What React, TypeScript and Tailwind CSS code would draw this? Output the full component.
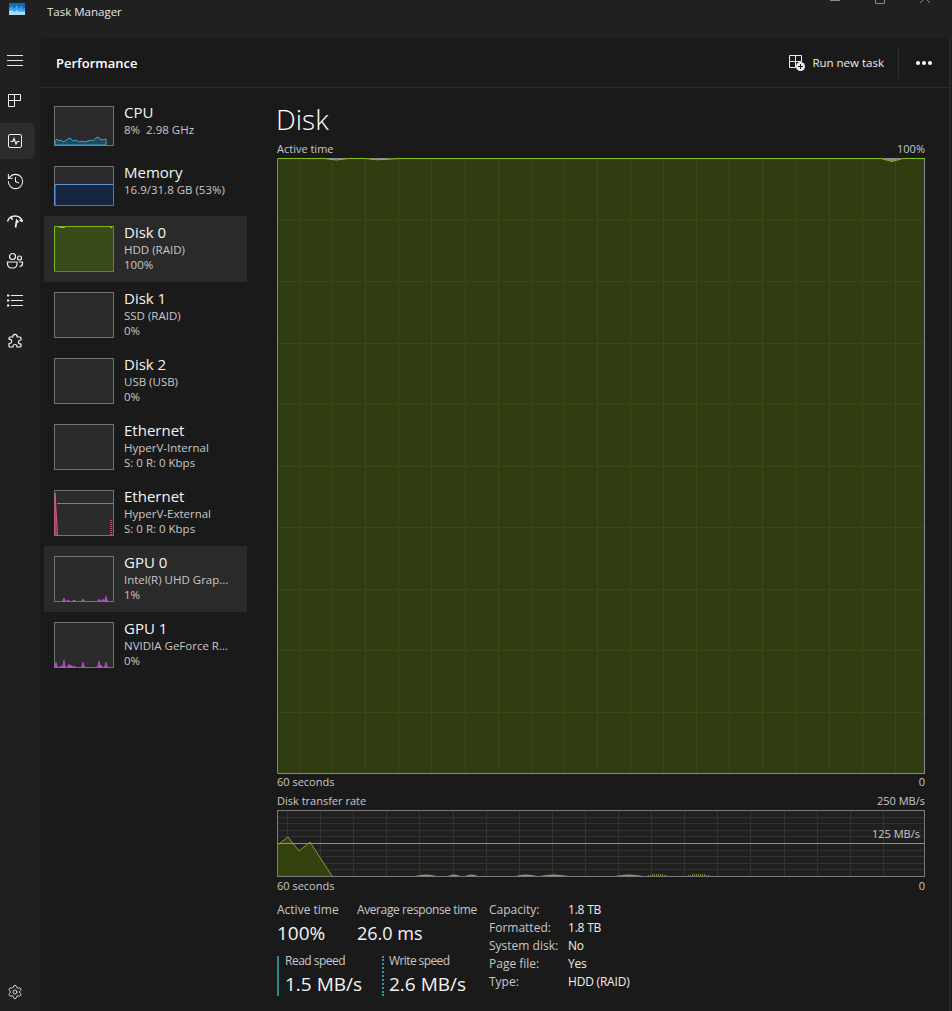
import type { ReactNode } from "react";
import { History, Settings } from "lucide-react";

const FONT = "font-['Open_Sans','Noto_Sans',sans-serif]";

const W = 648;
const H = 615;

function Rail() {
  return (
    <nav className="mb-[-1px] flex w-10 shrink-0 flex-col pt-[3px]">
      <RailBtn>
        <svg width="16" height="16" viewBox="0 0 16 16" stroke="#e4e4e4">
          <path d="M0 2.500h16M0 7.500h16M0 12.500h16" />
        </svg>
      </RailBtn>
      <RailBtn>
        <svg width="16" height="16" viewBox="0 0 16 16" fill="none" stroke="#eeeeee">
          <path d="M1.500 1.500h6v6h-6zM7.500 1.500h6v6h-6zM1.500 7.500h6v6h-6z" />
        </svg>
      </RailBtn>
      <RailBtn active>
        <svg width="16" height="16" viewBox="0 0 16 16" fill="none" stroke="#eeeeee">
          <rect x="1.500" y="1.500" width="13" height="13" rx="1.500" />
          <path d="M3.500 8.500h2.200l1.300-3 2 5.500 1.300-2.500h2.200" strokeWidth="1.200" />
        </svg>
      </RailBtn>
      <RailBtn>
        <History size={19} strokeWidth={1.3} className="text-[#f2f2f2]" />
      </RailBtn>
      <RailBtn>
        <svg width="18" height="16" viewBox="0 0 18 16" fill="none" stroke="#eeeeee" strokeWidth="1.500">
          <path d="M1.500 8.500c1-3 3.500-5.500 7.500-5.500s6.500 2.500 7.500 5.500" />
          <path d="M5 3.800l1.500 3M16.500 8.500l-3-1.500" />
          <path d="M9.500 14.500l1.200-7 1.800 2" strokeWidth="1.800" />
        </svg>
      </RailBtn>
      <RailBtn>
        <svg width="18" height="18" viewBox="0 0 18 18" fill="none" stroke="#f2f2f2" strokeWidth="1.200">
          <circle cx="6.500" cy="4.500" r="3" />
          <circle cx="13.500" cy="6" r="2" />
          <path d="M1.500 10h9.500v2a4 4 0 0 1-4 4H5.500a4 4 0 0 1-4-4z" />
          <path d="M13 10h3.500v1.500a3 3 0 0 1-3 3" />
        </svg>
      </RailBtn>
      <RailBtn>
        <svg width="16" height="16" viewBox="0 0 16 16" stroke="#eeeeee" fill="none">
          <path d="M4 2.500h12M4 7.500h12M4 12.500h12" />
          <path d="M0 2h2v1H0zM0 7h2v1H0zM0 12h2v1H0z" fill="#eeeeee" />
        </svg>
      </RailBtn>
      <RailBtn>
        <svg width="16" height="18" viewBox="0 -1 16 18" fill="none" stroke="#f2f2f2" strokeWidth="1.200">
          <path d="M5.800 3.500a2.200 2.200 0 0 1 4.400 0v.5H13a1 1 0 0 1 1 1V7h-.5a2 2 0 0 0 0 4h.5v2a1 1 0 0 1-1 1h-3v-.5a2 2 0 0 0-4 0v.5H3a1 1 0 0 1-1-1v-2.500h.5a2.200 2.200 0 0 0 0-4.400H2V5a1 1 0 0 1 1-1h2.800z" />
        </svg>
      </RailBtn>
      <div className="mt-auto">
        <RailBtn>
          <Settings size={16} strokeWidth={1.3} className="text-[#eeeeee]" />
        </RailBtn>
      </div>
    </nav>
  );
}

function RailBtn({ children, active }: { children: ReactNode; active?: boolean }) {
  return (
    <div className="flex h-10 w-[35px] items-center">
      <div
        className={`flex h-9 w-[35px] items-center justify-center rounded-r-md pr-[5px] ${active ? "bg-[#2d2d2d]" : ""}`}
      >
        {children}
      </div>
    </div>
  );
}

function Thumb({ tall, children, fill }: { tall?: boolean; children?: ReactNode; fill?: string }) {
  return (
    <div
      className={`relative w-[60px] shrink-0 border border-[#727272] ${tall ? "h-[46px]" : "h-10"} ${fill ?? "bg-[#2b2b2b]"}`}
    >
      {children}
    </div>
  );
}

function ThumbSvg({ h, children }: { h: number; children: ReactNode }) {
  return (
    <svg className="absolute -inset-px" width="60" height={h} viewBox={`0 0 60 ${h}`}>
      {children}
    </svg>
  );
}

// little peaks along the floor of a GPU thumbnail: [x, height]
function Spikes({ peaks }: { peaks: number[][] }) {
  const d = peaks.map(([x, h]) => `M${x - 1.5} 45L${x} ${45 - h}L${x + 1.5} 45z`).join("");
  return <path d={d} fill="#a548bf" stroke="#c85fe0" strokeWidth=".5" />;
}

function Row({
  name,
  lines,
  tall,
  selected,
  thumb,
}: {
  name: string;
  lines: string[];
  tall?: boolean;
  selected?: boolean;
  thumb: ReactNode;
}) {
  return (
    <div
      className={`flex w-[203px] items-start gap-[10px] pt-[10px] pl-[10px] ${tall ? "h-[66px]" : "h-[60px]"} ${selected ? "bg-[#2a2a2a]" : ""}`}
    >
      {thumb}
      <div className="mt-[-4px] min-w-0">
        <div className="text-[15px] leading-5 text-[#f4f4f4]">{name}</div>
        {lines.map((l) => (
          <div key={l} className="text-[11.5px] leading-[15px] whitespace-pre text-[#c8c8c8]">
            {l}
          </div>
        ))}
      </div>
    </div>
  );
}

function Sidebar() {
  return (
    <aside className="flex w-[237px] shrink-0 flex-col pt-2 pl-1">
      <Row
        name="CPU"
        lines={["8%  2.98 GHz"]}
        thumb={
          <Thumb>
            <ThumbSvg h={40}>
              <path
                d="M1 35l2-2 2 2 2-1 2 2 2-1 3-2 2-1 2 2 2 1 2-1 3 2 3-1 3 1 3-1 3-1 2 1 3-3 2-1 2 2 3 1 3-1V39H1z"
                fill="#1f4a5c"
                stroke="#38a8d8"
              />
            </ThumbSvg>
          </Thumb>
        }
      />
      <Row
        name="Memory"
        lines={["16.9/31.8 GB (53%)"]}
        thumb={
          <Thumb>
            <ThumbSvg h={40}>
              <rect x="1" y="19" width="58" height="20" fill="#17263f" />
              <path d="M1 39V18.500H59" fill="none" stroke="#5b94d6" />
              <path d="M.5 19V39" stroke="#5b94d6" />
            </ThumbSvg>
          </Thumb>
        }
      />
      <Row
        name="Disk 0"
        lines={["HDD (RAID)", "100%"]}
        tall
        selected
        thumb={
          <Thumb tall fill="bg-[#3a4a18]">
            <ThumbSvg h={46}>
              <path d="M.5 45V.500H59.500" fill="none" stroke="#7fb81c" />
              <path d="M5 1.500h6M56 1.500h2" stroke="#9aa58a" />
            </ThumbSvg>
          </Thumb>
        }
      />
      <Row name="Disk 1" lines={["SSD (RAID)", "0%"]} tall thumb={<Thumb tall />} />
      <Row name="Disk 2" lines={["USB (USB)", "0%"]} tall thumb={<Thumb tall />} />
      <Row name="Ethernet" lines={["HyperV-Internal", "S: 0 R: 0 Kbps"]} tall thumb={<Thumb tall />} />
      <Row
        name="Ethernet"
        lines={["HyperV-External", "S: 0 R: 0 Kbps"]}
        tall
        thumb={
          <Thumb tall>
            <ThumbSvg h={46}>
              <path d="M1 45V3l2.500 42z" fill="#7a2f4f" stroke="#e8517f" />
              <path d="M3 13.500H59" stroke="#e8517f" />
              <path d="M57 45V29" stroke="#b24a75" strokeWidth="2" strokeDasharray="1 1" />
              <path d="M59 45V35" stroke="#8a3a5c" strokeDasharray="1 1" />
            </ThumbSvg>
          </Thumb>
        }
      />
      <Row
        name="GPU 0"
        lines={["Intel(R) UHD Grap...", "1%"]}
        tall
        selected
        thumb={
          <Thumb tall>
            <ThumbSvg h={46}>
              <Spikes peaks={[[10, 3], [14, 1], [20, 1], [29, 2], [45, 2], [49, 2], [52, 5]]} />
            </ThumbSvg>
          </Thumb>
        }
      />
      <Row
        name="GPU 1"
        lines={["NVIDIA GeForce R...", "0%"]}
        tall
        thumb={
          <Thumb tall>
            <ThumbSvg h={46}>
              <Spikes
                peaks={[[2, 5], [7, 1], [10, 7], [15, 3], [17, 2], [20, 1], [29, 5], [45, 6], [47, 2], [52, 5]]}
              />
            </ThumbSvg>
          </Thumb>
        }
      />
    </aside>
  );
}

const VX = Array.from({ length: 19 }, (_, i) => 22 + i * 33.1);

function ActiveGraph() {
  return (
    <svg width={W} height={H + 1} viewBox={`0 0 ${W} ${H + 1}`} className="block">
      <rect x="0" y="0" width={W} height={H} fill="#2f3d10" />
      {VX.map((x) => (
        <path key={x} d={`M${Math.round(x) + 0.5} 1V${H}`} stroke="#394818" />
      ))}
      {Array.from({ length: 9 }, (_, i) => (
        <path key={i} d={`M0 ${Math.round(61.5 * (i + 1)) + 0.5}H${W}`} stroke="#394818" />
      ))}
      <path d="M47 0q12 3 25 0M88 0q12 2 20 1q10-1 20-1M604 0l11 3 11-3z" fill="#8d8d8d" />
      <path
        d="M.5 .5H47q12 3 25 0H88q12 2 20 1q10-1 20-1H604l11 3 11-3H648"
        fill="none"
        stroke="#86c01e"
      />
      <path d="M.5 1V615" stroke="#7f8a6a" />
      <path d="M.5 615.500H648M647.500 1V615" stroke="#8a8a8a" fill="none" />
    </svg>
  );
}

function TransferGraph() {
  const bumps = [
    [138, 160],
    [171, 183],
    [188, 201],
    [238, 260],
    [263, 291],
    [338, 366],
  ];
  const dotted = [
    [371, 391],
    [411, 433],
  ];
  return (
    <svg width={W} height="67" viewBox={`0 0 ${W} 67`} className="block">
      <rect width={W} height="67" fill="#202020" />
      {VX.map((x) => (
        <path key={x} d={`M${Math.round(x) - 11.5} 0V66`} stroke="#333333" />
      ))}
      {Array.from({ length: 9 }, (_, i) => (
        <path key={i} d={`M0 ${Math.round(6.6 * (i + 1)) + 0.5}H${W}`} stroke="#333333" />
      ))}
      <path d="M.5 66V35L11 27l11 14 11-9 22 34z" fill="#33420f" />
      <path d="M.5 66V35L11 27l11 14 11-9 22 34" fill="none" stroke="#7f9f26" />
      <path d="M0 33.500H648" stroke="#86a82a" />
      {bumps.map(([a, b]) => (
        <path key={a} d={`M${a} 66q${(b - a) / 2} -3 ${b - a} 0z`} fill="#86a82a" />
      ))}
      {dotted.map(([a, b]) => (
        <path key={a} d={`M${a} 65.500H${b}M${a + 4} 64.500H${b - 4}`} stroke="#6f8a25" strokeDasharray="1 1" />
      ))}
      <rect x=".5" y=".5" width="647" height="66" fill="none" stroke="#7a7a7a" />
    </svg>
  );
}

function Stats() {
  const rows = [
    ["Capacity:", "1.8 TB"],
    ["Formatted:", "1.8 TB"],
    ["System disk:", "No"],
    ["Page file:", "Yes"],
    ["Type:", "HDD (RAID)"],
  ];
  const label = "text-[12px] leading-4 whitespace-nowrap text-[#c8c8c8]";
  const value = "text-[19px] leading-6 whitespace-nowrap text-[#f4f4f4]";
  return (
    <div className="mt-2 flex">
      <div className="w-[212px]">
        <div className="flex">
          <div className="w-20">
            <div className={label}>Active time</div>
            <div className={`${value} mt-[3px]`}>100%</div>
          </div>
          <div>
            <div className={`${label} tracking-[-0.4px]`}>Average response time</div>
            <div className={`${value} mt-[3px] text-[18px]!`}>26.0 ms</div>
          </div>
        </div>
        <div className="mt-[11px] flex">
          <div className="h-10 w-[105px] border-l-2 border-[#2a8494] pl-[6px]">
            <div className={`${label} mt-[-3px] tracking-[-0.5px]`}>Read speed</div>
            <div className={`${value} mt-[3px]`}>1.5 MB/s</div>
          </div>
          <div className="h-10 border-l-2 border-dotted border-[#2f95a5] pl-[5px]">
            <div className={`${label} mt-[-3px] tracking-[-0.6px]`}>Write speed</div>
            <div className={`${value} mt-[3px]`}>2.6 MB/s</div>
          </div>
        </div>
      </div>
      <div className="mt-[-1px] grid auto-rows-[18px] grid-cols-[79px_auto] items-center text-[12px] leading-4 text-[#c8c8c8]">
        {rows.map(([k, v]) => (
          <div key={k} className="contents">
            <div>{k}</div>
            <div className="tracking-[-0.2px] text-[#eeeeee]">{v}</div>
          </div>
        ))}
      </div>
    </div>
  );
}

function Detail() {
  const cap = "flex justify-between text-[11px] leading-4 text-[#c8c8c8]";
  return (
    <section className="w-[648px] shrink-0">
      <h1 className="ml-[-1px] h-[53px] pt-[13px] text-[28px] leading-9 font-light text-white">Disk</h1>
      <div className={cap}>
        <span>Active time</span>
        <span>100%</span>
      </div>
      <div className="mt-px">
        <ActiveGraph />
      </div>
      <div className={cap}>
        <span>60 seconds</span>
        <span>0</span>
      </div>
      <div className={`${cap} mt-[3px]`}>
        <span>Disk transfer rate</span>
        <span>250 MB/s</span>
      </div>
      <div className="relative mt-px">
        <TransferGraph />
        <span className="absolute top-4 right-[5px] text-[11px] leading-4 text-[#c8c8c8]">125 MB/s</span>
      </div>
      <div className={`${cap} mt-px`}>
        <span>60 seconds</span>
        <span>0</span>
      </div>
      <Stats />
    </section>
  );
}

export default function App() {
  return (
    <div className={`flex h-[1011px] w-[952px] flex-col overflow-hidden bg-[#202020] ${FONT}`}>
      <header className="relative flex h-[38px] shrink-0 items-start">
        <svg className="mt-[3px] ml-[9px]" width="16" height="12" viewBox="0 0 16 12">
          <rect width="16" height="12" fill="#0f6cbd" />
          <path d="M0 12V5l3-2 2 3 3-4 2 4 2-3 2 3 2-1v7z" fill="#3aa0e8" />
          <path d="M0 12V8l3-1 2 2 3-2 2 2 2-1 2 1 2-1v4z" fill="#a6dcf9" />
        </svg>
        <span className="mt-[4px] ml-[22px] text-[11.5px] leading-4 font-medium text-[#e6e6e6]">Task Manager</span>
        <div className="absolute top-0 right-[22px] flex gap-[35px]">
          <div className="h-px w-[10px] bg-[#8a8a8a]" />
          <div className="mt-[-6px] h-[10px] w-[10px] rounded-[1px] border border-[#8a8a8a]" />
          <svg width="10" height="3" viewBox="0 0 10 3" stroke="#8a8a8a" fill="none">
            <path d="M0 3l3-3M10 3l-3-3" />
          </svg>
        </div>
      </header>
      <div className="flex min-h-0 flex-1">
        <Rail />
        <main className="mr-[2px] min-w-0 flex-1 rounded-tl-lg border-r border-[#2b2b2b] bg-[#1a1a1a] text-white">
          <div className="flex h-[50px] items-center border-b border-[#2b2b2b] pt-px pl-4">
            <span className="mt-[2px] text-[13px] font-semibold">Performance</span>
            <div className="ml-auto flex items-center">
              <svg width="16" height="16" viewBox="0 0 16 16" fill="none" stroke="#eeeeee">
                <path d="M.5 .5h6v6h-6zM6.500 .5h6v6h-6zM.5 6.500h6v6h-6z" />
                <circle cx="11.500" cy="11.500" r="4.500" fill="#eeeeee" stroke="none" />
                <path d="M11.500 9v5M9 11.500h5" stroke="#1a1a1a" />
              </svg>
              <span className="ml-[7px] text-[11.5px] font-medium text-[#eeeeee]">Run new task</span>
              <div className="ml-[14px] h-8 w-px bg-[#2f2f2f]" />
              <div className="mr-[17px] ml-[17px] flex gap-[2px]">
                <i className="size-1 rounded-full bg-white" />
                <i className="size-1 rounded-full bg-white" />
                <i className="size-1 rounded-full bg-white" />
              </div>
            </div>
          </div>
          <div className="flex">
            <Sidebar />
            <Detail />
          </div>
        </main>
      </div>
    </div>
  );
}
